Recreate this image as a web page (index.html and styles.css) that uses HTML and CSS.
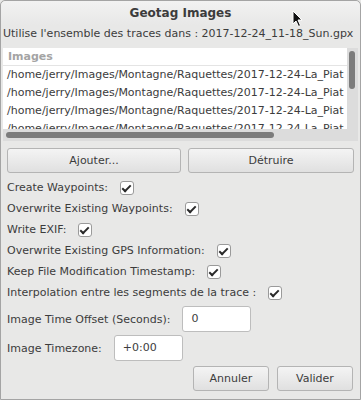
FILE: index.html
```html
<!DOCTYPE html>
<html lang="fr">

<head>
  <meta charset="UTF-8" />
  <meta name="viewport" content="width=device-width, initial-scale=1.0" />
  <title>Geotag Images</title>

  <link rel="stylesheet" href="styles.css">
</head>

<body>
  <div class="window">
    <div class="titlebar">Geotag Images</div>

    <p class="subtitle">Utilise l'ensemble des traces dans : 2017-12-24_11-18_Sun.gpx</p>

    <div class="list">
      <div class="list-view">
        <div class="list-head">Images</div>
        <div class="list-row">/home/jerry/Images/Montagne/Raquettes/2017-12-24-La_Piat</div>
        <div class="list-row">/home/jerry/Images/Montagne/Raquettes/2017-12-24-La_Piat</div>
        <div class="list-row">/home/jerry/Images/Montagne/Raquettes/2017-12-24-La_Piat</div>
        <div class="list-row">/home/jerry/Images/Montagne/Raquettes/2017-12-24-La_Piat</div>
      </div>
      <div class="vscroll"><span class="vthumb"></span></div>
      <div class="hscroll"><span class="hthumb"></span></div>
    </div>

    <div class="btn-pair">
      <button class="btn">Ajouter...</button>
      <button class="btn">Détruire</button>
    </div>

    <div class="options">
      <label class="opt">Create Waypoints: <span class="check"></span></label>
      <label class="opt">Overwrite Existing Waypoints: <span class="check"></span></label>
      <label class="opt">Write EXIF: <span class="check"></span></label>
      <label class="opt">Overwrite Existing GPS Information: <span class="check"></span></label>
      <label class="opt">Keep File Modification Timestamp: <span class="check"></span></label>
      <label class="opt">Interpolation entre les segments de la trace : <span class="check"></span></label>
    </div>

    <div class="field">
      <span>Image Time Offset (Seconds):</span>
      <span class="entry">0</span>
    </div>
    <div class="field tz">
      <span>Image Timezone:</span>
      <span class="entry">+0:00</span>
    </div>

    <div class="actions">
      <button class="btn">Annuler</button>
      <button class="btn">Valider</button>
    </div>

    <svg class="cursor" width="12" height="18" viewBox="0 0 12 18">
      <path d="M1 1 L1 14 L4 11 L6.5 16.5 L8.5 15.5 L6 10 L10 10 Z" fill="#111" stroke="#fff" stroke-width="1" />
    </svg>
  </div>
</body>

</html>
```

FILE: styles.css
```css
* {
  box-sizing: border-box;
  font-family: "DejaVu Sans", sans-serif;
  font-size: 11px;
  color: #3c3c3c;
}

body {
  margin: 0;
  background-color: #e8e8e7;
}

.window {
  position: relative;
  width: 361px;
  height: 400px;
  border: 1px solid #a4a4a4;
  border-radius: 5px 5px 0 0;
  background-color: #e8e8e7;
}

.titlebar {
  height: 24px;
  line-height: 24px;
  text-align: center;
  font-weight: bold;
  font-size: 12px;
  background: linear-gradient(#f2f2f2, #e8e8e7);
  border-radius: 5px 5px 0 0;
}

.subtitle {
  margin: 0;
  padding: 0 0 0 2px;
  height: 23px;
  line-height: 18px;
}

.list {
  margin: 0 2px 0 2px;
  height: 93px;
  display: grid;
  grid-template-columns: minmax(0, 1fr) 11px;
  grid-template-rows: minmax(0, 1fr) 12px;
  background-color: #fff;
  overflow: hidden;
}

.list-view {
  grid-column: 1;
  grid-row: 1;
  overflow: hidden;
  white-space: nowrap;
}

.list-head {
  height: 18px;
  line-height: 18px;
  padding-left: 5px;
  font-weight: bold;
  color: #a4a4a4;
  border-bottom: 1px solid #e4e4e4;
}

.list-row {
  height: 18px;
  line-height: 18px;
  padding-left: 4px;
}

.vscroll {
  grid-column: 2;
  grid-row: 1 / 3;
  background-color: #dcdcdc;
  padding: 3px 3px 0 2px;
}

.vthumb {
  display: block;
  width: 6px;
  height: 38px;
  border-radius: 3px;
  background-color: #7c7c7c;
}

.hscroll {
  grid-column: 1;
  grid-row: 2;
  background-color: #dcdcdc;
  padding: 3px 3px;
}

.hthumb {
  display: block;
  width: 268px;
  height: 6px;
  border-radius: 3px;
  background-color: #7c7c7c;
}

.btn {
  height: 25px;
  border: 1px solid #b4b4b4;
  border-radius: 3px;
  background: linear-gradient(#f4f4f4, #e0e0e0);
  padding: 0;
  font-size: 11px;
}

.btn-pair {
  display: grid;
  grid-template-columns: 174px 166px;
  gap: 7px;
  padding: 7px 0 0 6px;
}

.options {
  display: flex;
  flex-direction: column;
  padding: 4px 0 0 6px;
}

.opt {
  display: flex;
  align-items: center;
  gap: 12px;
  height: 21px;
}

.check {
  width: 14px;
  height: 14px;
  border: 1px solid #9a9a9a;
  border-radius: 3px;
  background-color: #fff;
  position: relative;
}

.check::after {
  content: "";
  position: absolute;
  left: 3px;
  top: 1px;
  width: 3px;
  height: 7px;
  border: solid #2a2a2a;
  border-width: 0 2px 2px 0;
  transform: rotate(45deg);
}

.field {
  display: flex;
  align-items: center;
  gap: 12px;
  padding: 3px 0 0 6px;
}

.field.tz {
  padding-top: 3px;
}

.entry {
  width: 69px;
  height: 26px;
  line-height: 24px;
  padding-left: 8px;
  border: 1px solid #bdbdbd;
  border-radius: 3px;
  background-color: #fff;
}

.actions {
  display: flex;
  justify-content: flex-end;
  gap: 8px;
  padding: 5px 7px 0 0;
}

.actions .btn {
  width: 76px;
}

.cursor {
  position: absolute;
  left: 291px;
  top: 9px;
}
```
